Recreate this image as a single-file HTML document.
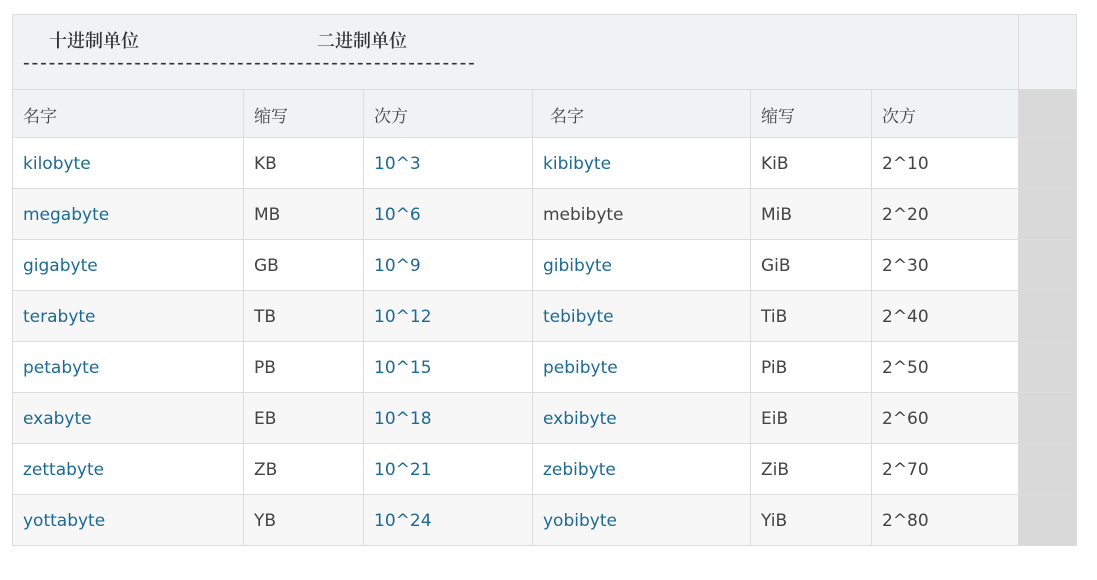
<!DOCTYPE html>
<html><head><meta charset="utf-8"><style>
body{margin:0;background:#fff;width:1097px;height:580px;overflow:hidden}
table{position:absolute;left:12px;top:14px;border-collapse:collapse;table-layout:fixed;font-family:"DejaVu Sans","Liberation Sans",sans-serif;font-size:17px;color:#444}
td{border:1px solid #dcdcdc;padding:2px 0 0 10px;white-space:nowrap;overflow:hidden}
.h td{background:#eff3f4;height:72px;vertical-align:top}
.ch td{background:#eff3f4;height:45px;font-family:"Noto Serif CJK SC","WenQuanYi Zen Hei",serif;font-size:17px;color:#444}
.r td{height:48px;background:#fff}
.r.a td{background:#f7f7f7}
td.g{background:#d9d9d9!important;padding:0}
.b{color:#1d6a94}
.hd{font-family:"Noto Serif CJK SC","WenQuanYi Zen Hei",serif;font-size:18px;font-weight:600;color:#333;position:relative}
</style></head><body>
<table>
<colgroup><col style="width:231px"><col style="width:120px"><col style="width:169px"><col style="width:218px"><col style="width:121px"><col style="width:147px"><col style="width:58px"></colgroup>
<tr class="h"><td colspan="6" class="hd"><span style="position:absolute;left:36px;top:12px">十进制单位</span><span style="position:absolute;left:304px;top:12px">二进制单位</span><span style="position:absolute;left:10px;top:37px;font-family:'Liberation Sans',sans-serif;font-weight:normal;font-size:20px;letter-spacing:1.9px">-----------------------------------------------------</span></td><td style="background:#eff3f4;padding:0"></td></tr>
<tr class="ch"><td>名字</td><td>缩写</td><td>次方</td><td style="padding-left:17px">名字</td><td>缩写</td><td>次方</td><td class="g"></td></tr>
<tr class="r"><td class="b">kilobyte</td><td>KB</td><td class="b">10^3</td><td class="b">kibibyte</td><td>KiB</td><td>2^10</td><td class="g"></td></tr>
<tr class="r a"><td class="b">megabyte</td><td>MB</td><td class="b">10^6</td><td>mebibyte</td><td>MiB</td><td>2^20</td><td class="g"></td></tr>
<tr class="r"><td class="b">gigabyte</td><td>GB</td><td class="b">10^9</td><td class="b">gibibyte</td><td>GiB</td><td>2^30</td><td class="g"></td></tr>
<tr class="r a"><td class="b">terabyte</td><td>TB</td><td class="b">10^12</td><td class="b">tebibyte</td><td>TiB</td><td>2^40</td><td class="g"></td></tr>
<tr class="r"><td class="b">petabyte</td><td>PB</td><td class="b">10^15</td><td class="b">pebibyte</td><td>PiB</td><td>2^50</td><td class="g"></td></tr>
<tr class="r a"><td class="b">exabyte</td><td>EB</td><td class="b">10^18</td><td class="b">exbibyte</td><td>EiB</td><td>2^60</td><td class="g"></td></tr>
<tr class="r"><td class="b">zettabyte</td><td>ZB</td><td class="b">10^21</td><td class="b">zebibyte</td><td>ZiB</td><td>2^70</td><td class="g"></td></tr>
<tr class="r a"><td class="b">yottabyte</td><td>YB</td><td class="b">10^24</td><td class="b">yobibyte</td><td>YiB</td><td>2^80</td><td class="g"></td></tr>
</table>
</body></html>
